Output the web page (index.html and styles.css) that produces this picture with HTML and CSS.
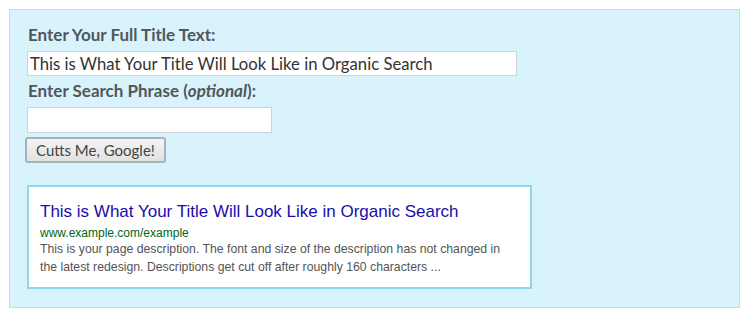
FILE: index.html
```html
<!DOCTYPE html>
<html lang="en">
<head>
  <meta charset="UTF-8">
  <title>Title Preview Tool</title>
  <link rel="stylesheet" href="styles.css">
</head>
<body>

  <div class="tool">
    <form class="tool-form">
      <label for="title" class="lbl lbl-first">Enter Your Full Title Text:</label>
      <input type="text" id="title" class="field field-title" value="This is What Your Title Will Look Like in Organic Search">

      <label for="phrase" class="lbl">Enter Search Phrase (<em>optional</em>):</label>
      <input type="text" id="phrase" class="field field-phrase">

      <div><button type="button" class="btn">Cutts Me, Google!</button></div>
    </form>

    <div class="serp">
      <div class="serp-title">This is What Your Title Will Look Like in Organic Search</div>
      <div class="serp-url">www.example.com/example</div>
      <div class="serp-desc">This is your page description. The font and size of the description has not changed in the latest redesign. Descriptions get cut off after roughly 160 characters ...</div>
    </div>
  </div>

</body>
</html>
```

FILE: styles.css
```css
body {
  margin: 0;
  padding: 9px;
  font-family: Lato, "Open Sans", sans-serif;
}

.tool {
  background: #d9f3fd;
  border: 1px solid #b1e3f6;
  height: 299px;
  box-sizing: border-box;
  padding: 15px 17px 0 17px;
}

.tool-form {
  display: flex;
  flex-direction: column;
  align-items: flex-start;
}

.lbl {
  font-weight: bold;
  font-size: 17px;
  line-height: 20px;
  color: #52575a;
  padding-left: 1px;
  margin-top: 5px;
}

.lbl em {
  font-style: italic;
}

.lbl-first {
  margin-top: 0;
}

.field {
  font-family: Lato, sans-serif;
  font-size: 16.7px;
  color: #333;
  background: #fff;
  border: 1px solid #cdd3d6;
  height: 26px;
  box-sizing: border-box;
  padding: 1px 2px;
  margin-top: 6px;
}

.field-title {
  width: 490px;
  height: 25px;
}

.field-phrase {
  width: 245px;
}

.btn {
  font-family: Lato, sans-serif;
  font-size: 15px;
  color: #444;
  background: linear-gradient(#f4f4f4, #e2e2e2);
  border: 2px solid #a4b3bb;
  border-radius: 3px;
  height: 26px;
  padding: 0 9px;
  margin-top: 4px;
  margin-left: -2px;
}

.serp {
  margin-top: 22px;
  width: 505px;
  box-sizing: border-box;
  background: #fff;
  border: 2px solid #8fd7f1;
  padding: 15px 22px 11px 11px;
  font-family: Arial, "Liberation Sans", sans-serif;
}

.serp-title {
  font-size: 17px;
  line-height: 20px;
  color: #1a0dab;
}

.serp-url {
  font-size: 12px;
  line-height: 13px;
  color: #006621;
  margin-top: 5px;
}

.serp-desc {
  font-size: 12.25px;
  line-height: 18px;
  color: #545454;
}
```
